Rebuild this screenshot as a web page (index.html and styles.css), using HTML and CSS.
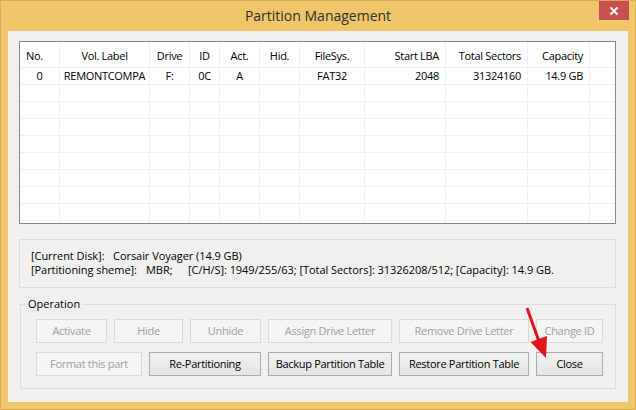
FILE: index.html
```html
<!DOCTYPE html>
<html>
<head>
<meta charset="utf-8">
<link rel="stylesheet" href="styles.css">
</head>
<body>
<div class="window">
  <div class="titlebar">
    <span class="title">Partition Management</span>
    <div class="close">
      <svg width="10" height="10" viewBox="0 0 10 10"><path d="M1.5 1.5 L8.5 8.5 M8.5 1.5 L1.5 8.5" stroke="#fff" stroke-width="1.8" fill="none"/></svg>
    </div>
  </div>
  <div class="client">
    <div class="table">
      <div class="row head">
        <div class="c left">No.</div>
        <div class="c">Vol. Label</div>
        <div class="c">Drive</div>
        <div class="c">ID</div>
        <div class="c">Act.</div>
        <div class="c">Hid.</div>
        <div class="c">FileSys.</div>
        <div class="c right">Start LBA</div>
        <div class="c right">Total Sectors</div>
        <div class="c right">Capacity</div>
        <div class="c"></div>
      </div>
      <div class="row">
        <div class="c">0</div>
        <div class="c">REMONTCOMPA</div>
        <div class="c">F:</div>
        <div class="c">0C</div>
        <div class="c">A</div>
        <div class="c"></div>
        <div class="c">FAT32</div>
        <div class="c right">2048</div>
        <div class="c right">31324160</div>
        <div class="c right">14.9 GB</div>
        <div class="c"></div>
      </div>
      <div class="row"><div class="c"></div><div class="c"></div><div class="c"></div><div class="c"></div><div class="c"></div><div class="c"></div><div class="c"></div><div class="c"></div><div class="c"></div><div class="c"></div><div class="c"></div></div>
      <div class="row"><div class="c"></div><div class="c"></div><div class="c"></div><div class="c"></div><div class="c"></div><div class="c"></div><div class="c"></div><div class="c"></div><div class="c"></div><div class="c"></div><div class="c"></div></div>
      <div class="row"><div class="c"></div><div class="c"></div><div class="c"></div><div class="c"></div><div class="c"></div><div class="c"></div><div class="c"></div><div class="c"></div><div class="c"></div><div class="c"></div><div class="c"></div></div>
      <div class="row"><div class="c"></div><div class="c"></div><div class="c"></div><div class="c"></div><div class="c"></div><div class="c"></div><div class="c"></div><div class="c"></div><div class="c"></div><div class="c"></div><div class="c"></div></div>
      <div class="row"><div class="c"></div><div class="c"></div><div class="c"></div><div class="c"></div><div class="c"></div><div class="c"></div><div class="c"></div><div class="c"></div><div class="c"></div><div class="c"></div><div class="c"></div></div>
      <div class="row"><div class="c"></div><div class="c"></div><div class="c"></div><div class="c"></div><div class="c"></div><div class="c"></div><div class="c"></div><div class="c"></div><div class="c"></div><div class="c"></div><div class="c"></div></div>
      <div class="row"><div class="c"></div><div class="c"></div><div class="c"></div><div class="c"></div><div class="c"></div><div class="c"></div><div class="c"></div><div class="c"></div><div class="c"></div><div class="c"></div><div class="c"></div></div>
      <div class="row"><div class="c"></div><div class="c"></div><div class="c"></div><div class="c"></div><div class="c"></div><div class="c"></div><div class="c"></div><div class="c"></div><div class="c"></div><div class="c"></div><div class="c"></div></div>
      <div class="row"><div class="c"></div><div class="c"></div><div class="c"></div><div class="c"></div><div class="c"></div><div class="c"></div><div class="c"></div><div class="c"></div><div class="c"></div><div class="c"></div><div class="c"></div></div>
    </div>

    <div class="info">
      <div class="line"><span class="k1">[Current Disk]:</span>Corsair Voyager (14.9 GB)</div>
      <div class="line"><span class="k2">[Partitioning sheme]:</span><span class="k3">MBR;</span>[C/H/S]: 1949/255/63; [Total Sectors]: 31326208/512; [Capacity]: 14.9 GB.</div>
    </div>

    <div class="group">
      <span class="group-title">Operation</span>
      <div class="btnrow r1">
        <div class="btn off">Activate</div>
        <div class="btn off">Hide</div>
        <div class="btn off">Unhide</div>
        <div class="btn off">Assign Drive Letter</div>
        <div class="btn off">Remove Drive Letter</div>
        <div class="btn off">Change ID</div>
      </div>
      <div class="btnrow r2">
        <div class="btn off">Format this part</div>
        <div class="btn">Re-Partitioning</div>
        <div class="btn">Backup Partition Table</div>
        <div class="btn">Restore Partition Table</div>
        <div class="btn">Close</div>
      </div>
    </div>
  </div>

  <svg class="arrow" width="60" height="65" viewBox="0 0 60 65">
    <line x1="17" y1="8" x2="28.5" y2="40" stroke="#e3141c" stroke-width="3"/>
    <polygon points="36,58 20.5,42 37,36" fill="#e3141c"/>
  </svg>
</div>
</body>
</html>
```

FILE: styles.css
```css
* { box-sizing: border-box; }
html, body { margin: 0; padding: 0; }
body {
  width: 636px;
  height: 410px;
  overflow: hidden;
  font-family: "Open Sans", "Noto Sans", sans-serif;
  font-size: 11px;
  color: #000;
}
.window {
  position: relative;
  width: 636px;
  height: 410px;
  background: #efc76a;
  border: 1px solid #d9ab4c;
  display: flex;
  flex-direction: column;
}
.titlebar {
  position: relative;
  height: 30px;
  flex: none;
  text-align: center;
  line-height: 30px;
}
.title {
  font-size: 14px;
  color: #2e2e2e;
}
.close {
  position: absolute;
  top: 0;
  right: 6px;
  width: 30px;
  height: 19px;
  background: #c75050;
  display: flex;
  align-items: center;
  justify-content: center;
}
.close svg { display: block; }
.client {
  flex: 1;
  margin: 0 7px 7px 7px;
  background: #f0f0f0;
  padding: 10px 12px 0 11px;
}
.table {
  height: 183px;
  border: 1px solid #828790;
  background: #fff;
  overflow: hidden;
  letter-spacing: -0.3px;
}
.row {
  display: grid;
  grid-template-columns: 40px 90px 40px 30px 40px 40px 65px 81px 82px 62px 1fr;
  height: 17px;
}
.row.head { height: 26px; }
.c {
  border-right: 1px solid #f0f0f0;
  border-bottom: 1px solid #f0f0f0;
  text-align: center;
  line-height: 16px;
  white-space: nowrap;
  overflow: hidden;
  padding: 0 1px;
}
.head .c { line-height: 27px; }
.c.right { text-align: right; padding-right: 6px; }
.c.left { text-align: left; padding-left: 6px; }
.row .c:last-child { border-right: 0; }

.info {
  margin-top: 15px;
  height: 49px;
  border: 1px solid #dcdcdc;
  padding: 9px 0 0 11px;
  white-space: nowrap;
  letter-spacing: -0.05px;
}
.line { line-height: 14px; }
.k1 { display: inline-block; width: 82px; }
.k2 { display: inline-block; width: 115px; }
.k3 { display: inline-block; width: 42px; }

.group {
  position: relative;
  margin-top: 16px;
  margin-left: 1px;
  height: 85px;
  border: 1px solid #dcdcdc;
  padding: 14px 0 0 15px;
}
.group-title {
  position: absolute;
  top: -8px;
  left: 5px;
  padding: 0 2px;
  background: #f0f0f0;
  line-height: 14px;
}
.btnrow {
  display: grid;
  column-gap: 7px;
}
.r1 { grid-template-columns: 71px 69px 71px 124px 130px 67px; }
.r2 { grid-template-columns: 106px 112px 124px 130px 67px; margin-top: 9px; }
.btn {
  height: 24px;
  border: 1px solid #acacac;
  background: linear-gradient(#f0f0f0, #e5e5e5);
  text-align: center;
  line-height: 22px;
  white-space: nowrap;
  color: #000;
  letter-spacing: -0.3px;
}
.btn.off {
  border-color: #d9d9d9;
  background: #f4f4f4;
  color: #a0a0a0;
}
.arrow {
  position: absolute;
  left: 509px;
  top: 299px;
}
```
